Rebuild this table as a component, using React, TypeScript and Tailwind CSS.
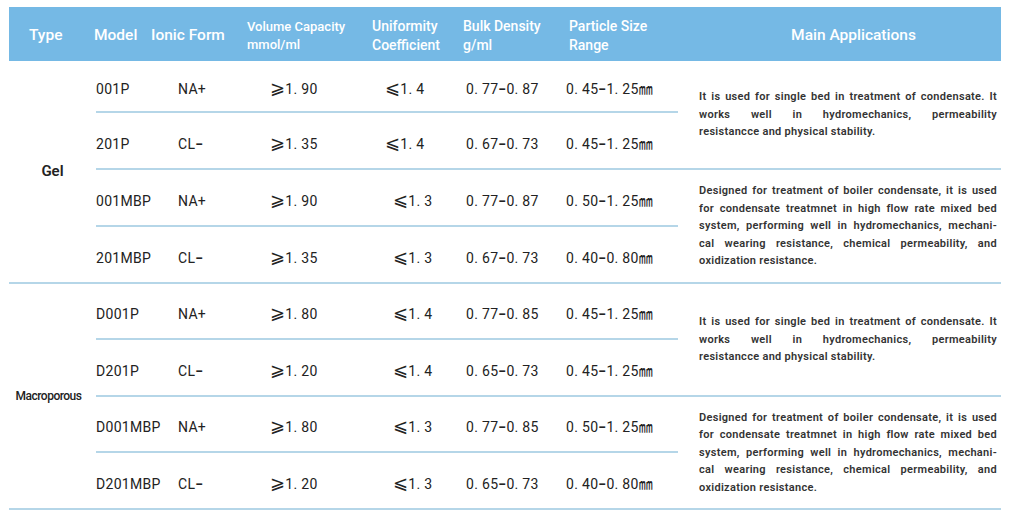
import React from 'react';

type Row = {
    model: string;
    ionic: string;
    volume: string;
    uc: string;
    ucShift?: boolean;
    bulk: string;
    size: string;
};

type Pair = {
    firstH: string;
    rows: [Row, Row];
    app: string[];
};

type Group = {
    type: string;
    typeClass: string;
    pairs: Pair[];
};

const shortApp = [
    'It is used for single bed in treatment of condensate. It',
    'works well in hydromechanics, permeability',
    'resistancce and physical stability.',
];

const longApp = [
    'Designed for treatment of boiler condensate, it is used',
    'for condensate treatmnet in high flow rate mixed bed',
    'system, performing well in hydromechanics, mechani-',
    'cal wearing resistance, chemical permeability, and',
    'oxidization resistance.',
];

const groups: Group[] = [
    {
        type: 'Gel',
        typeClass: 'text-[15px] font-semibold',
        pairs: [
            {
                firstH: 'h-[52px]',
                rows: [
                    { model: '001P', ionic: 'NA+', volume: '⩾1. 90', uc: '⩽1. 4', bulk: '0. 77−0. 87', size: '0. 45−1. 25㎜' },
                    { model: '201P', ionic: 'CL−', volume: '⩾1. 35', uc: '⩽1. 4', bulk: '0. 67−0. 73', size: '0. 45−1. 25㎜' },
                ],
                app: shortApp,
            },
            {
                firstH: 'h-[57px]',
                rows: [
                    { model: '001MBP', ionic: 'NA+', volume: '⩾1. 90', uc: '⩽1. 3', ucShift: true, bulk: '0. 77−0. 87', size: '0. 50−1. 25㎜' },
                    { model: '201MBP', ionic: 'CL−', volume: '⩾1. 35', uc: '⩽1. 3', ucShift: true, bulk: '0. 67−0. 73', size: '0. 40−0. 80㎜' },
                ],
                app: longApp,
            },
        ],
    },
    {
        type: 'Macroporous',
        typeClass: 'pr-[8px] text-[12px] font-medium tracking-[-0.5px]',
        pairs: [
            {
                firstH: 'h-[56px]',
                rows: [
                    { model: 'D001P', ionic: 'NA+', volume: '⩾1. 80', uc: '⩽1. 4', ucShift: true, bulk: '0. 77−0. 85', size: '0. 45−1. 25㎜' },
                    { model: 'D201P', ionic: 'CL−', volume: '⩾1. 20', uc: '⩽1. 4', ucShift: true, bulk: '0. 65−0. 73', size: '0. 45−1. 25㎜' },
                ],
                app: shortApp,
            },
            {
                firstH: 'h-[56px]',
                rows: [
                    { model: 'D001MBP', ionic: 'NA+', volume: '⩾1. 80', uc: '⩽1. 3', ucShift: true, bulk: '0. 77−0. 85', size: '0. 50−1. 25㎜' },
                    { model: 'D201MBP', ionic: 'CL−', volume: '⩾1. 20', uc: '⩽1. 3', ucShift: true, bulk: '0. 65−0. 73', size: '0. 40−0. 80㎜' },
                ],
                app: longApp,
            },
        ],
    },
];

// the comparison signs and dashes are heavier in the original print
function fmt(s: string) {
    return s.split('').map((ch, i) => {
        if (ch === '⩾' || ch === '⩽') {
            return (
                <span key={i} className="inline-block text-[18px] font-light leading-[0]">
                    {ch}
                </span>
            );
        }
        if (ch === '−') {
            return (
                <span key={i} className="font-bold">
                    {ch}
                </span>
            );
        }
        return ch;
    });
}

function DataRow({ row, className }: { row: Row; className: string }) {
    return (
        <div className={`flex items-center pt-[7px] text-[14px] tracking-[0.3px] text-[#222] ${className}`}>
            <div className="w-[82px]">{row.model}</div>
            <div className="w-[92px]">{fmt(row.ionic)}</div>
            <div className="w-[115px]">{fmt(row.volume)}</div>
            <div className={`w-[81px] ${row.ucShift ? 'pl-[8px]' : ''}`}>{fmt(row.uc)}</div>
            <div className="w-[100px]">{fmt(row.bulk)}</div>
            <div className="flex-1">{fmt(row.size)}</div>
        </div>
    );
}

function AppText({ lines }: { lines: string[] }) {
    return (
        <div className="flex flex-1 flex-col justify-center pl-[21px] pr-[4px] text-[11px] font-semibold leading-[17.4px] tracking-[0.3px] text-[#333]">
            {lines.map((line, i) => (
                <div
                    key={i}
                    className={i < lines.length - 1 ? 'text-justify [text-align-last:justify]' : 'text-left'}
                >
                    {line}
                </div>
            ))}
        </div>
    );
}

export default function App() {
    return (
        <div
            className="min-h-[525px] bg-white pl-[9px] pt-[7px]"
            style={{ fontFamily: 'Roboto, "Noto Sans CJK SC", "DejaVu Sans", sans-serif' }}
        >
            <div className="w-[992px]">
                {/* header */}
                <div className="flex h-[54px] items-center bg-[#75b9e5] pt-[3px] text-white">
                    <div className="w-[85px] pl-[20px] text-[15.5px] font-medium">Type</div>
                    <div className="w-[57px] text-[15.5px] font-medium">Model</div>
                    <div className="w-[96px] text-[15.5px] font-medium">Ionic Form</div>
                    <div className="w-[125px] text-[13px] font-medium leading-[18px]">
                        Volume Capacity
                        <br />
                        mmol/ml
                    </div>
                    <div className="w-[91px] text-[14px] font-medium leading-[19px]">
                        Uniformity
                        <br />
                        Coefficient
                    </div>
                    <div className="w-[106px] text-[14px] font-medium leading-[19px]">
                        Bulk Density
                        <br />
                        g/ml
                    </div>
                    <div className="w-[109px] text-[14px] font-medium leading-[19px]">
                        Particle Size
                        <br />
                        Range
                    </div>
                    <div className="flex-1 pl-[28px] text-center text-[15.5px] font-medium">Main Applications</div>
                </div>

                {/* body */}
                {groups.map((g) => (
                    <div key={g.type} className="flex border-b-2 border-[#b5d6e8]">
                        <div className={`flex w-[87px] items-center justify-center text-[#222] ${g.typeClass}`}>
                            {g.type}
                        </div>
                        <div className="flex flex-1 flex-col">
                            {g.pairs.map((p, pi) => (
                                <div
                                    key={pi}
                                    className={`flex ${pi < g.pairs.length - 1 ? 'border-b-2 border-[#b5d6e8]' : ''}`}
                                >
                                    <div className="flex w-[582px] flex-col">
                                        <DataRow row={p.rows[0]} className={`${p.firstH} border-b-2 border-[#b5d6e8]`} />
                                        <DataRow row={p.rows[1]} className="h-[55px]" />
                                    </div>
                                    <AppText lines={p.app} />
                                </div>
                            ))}
                        </div>
                    </div>
                ))}
            </div>
        </div>
    );
}
